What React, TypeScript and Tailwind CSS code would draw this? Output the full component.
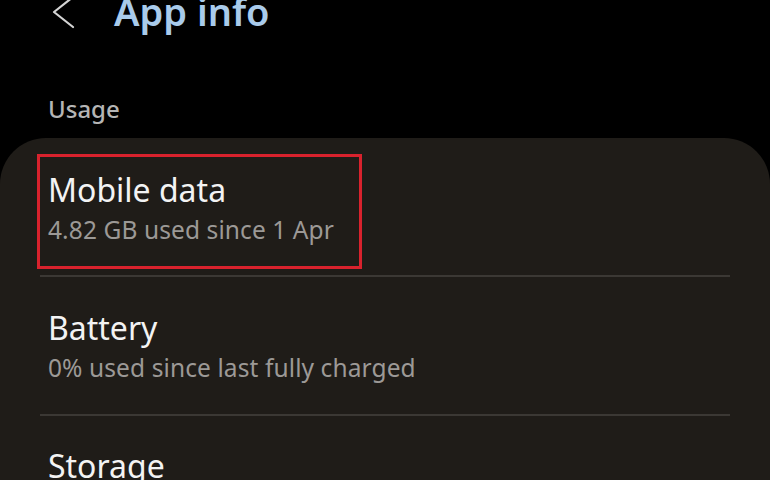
import React from "react";

export default function App() {
  const font = { fontFamily: '"Noto Sans", "Open Sans", sans-serif' };
  return (
    <div className="w-[770px] h-[480px] overflow-hidden bg-black flex flex-col" style={font}>
      {/* Header */}
      <div className="flex items-center mt-[-11px] h-[44px] shrink-0">
        <svg className="ml-[51px] shrink-0" width="24" height="44" viewBox="0 0 24 44">
          <path d="M22 8 L3 23 L22 38" fill="none" stroke="#d4d4d4" strokeWidth="2.2" strokeLinecap="round" strokeLinejoin="round" />
        </svg>
        <span className="ml-[39px] text-[38px] leading-[44px] font-semibold text-[#a9cbeb]">App info</span>
      </div>

      {/* Section label */}
      <div className="mt-[60px] pl-[48px] text-[24px] leading-[32px] font-medium text-[#b5b5b5] shrink-0">Usage</div>

      {/* Card */}
      <div className="mt-[13px] mx-0 flex-1 bg-[#1f1c18] rounded-t-[46px] pt-[16px]">
        <div className="ml-[37px] w-[325px] border-[3px] border-[#d8222d] pt-[13px] pl-[8px] pb-[20px]">
          <div className="text-[32px] leading-[40px] text-[#f3f3f3]">Mobile data</div>
          <div className="mt-[4px] text-[24.5px] leading-[32px] tracking-[0.1px] text-[#9c9996]">4.82 GB used since 1 Apr</div>
        </div>
        <div className="mt-[6px] mx-[40px] h-[2px] bg-[#3b3834]" />
        <div className="pt-[31px] pb-[30px] pl-[48px]">
          <div className="text-[32px] leading-[40px] text-[#f3f3f3]">Battery</div>
          <div className="mt-[4px] text-[24.5px] leading-[32px] tracking-[0.1px] text-[#9c9996]">0% used since last fully charged</div>
        </div>
        <div className="mx-[40px] h-[2px] bg-[#3b3834]" />
        <div className="pt-[30px] pl-[48px]">
          <div className="text-[32px] leading-[40px] text-[#f3f3f3]">Storage</div>
        </div>
      </div>
    </div>
  );
}
